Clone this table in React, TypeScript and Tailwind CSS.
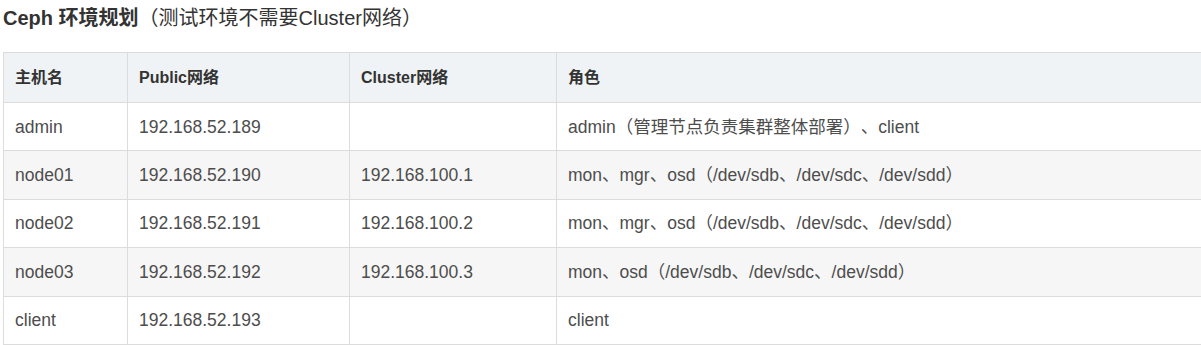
import React from "react";

const HEADERS = ["主机名", "Public网络", "Cluster网络", "角色"];

const ROWS: string[][] = [
  ["admin", "192.168.52.189", "", "admin（管理节点负责集群整体部署）、client"],
  ["node01", "192.168.52.190", "192.168.100.1", "mon、mgr、osd（/dev/sdb、/dev/sdc、/dev/sdd）"],
  ["node02", "192.168.52.191", "192.168.100.2", "mon、mgr、osd（/dev/sdb、/dev/sdc、/dev/sdd）"],
  ["node03", "192.168.52.192", "192.168.100.3", "mon、osd（/dev/sdb、/dev/sdc、/dev/sdd）"],
  ["client", "192.168.52.193", "", "client"],
];

const COL_WIDTHS = ["w-[124px]", "w-[222px]", "w-[207px]", ""];

const App = () => {
  return (
    <div
      className="w-screen overflow-hidden bg-white text-[#4d4d4d] [text-spacing-trim:space-all]"
      style={{ fontFamily: '"Liberation Sans", "Noto Sans CJK SC", sans-serif' }}
    >
      <div className="pl-[3px] pt-[3px] text-[20px] leading-[30px] text-[#333]">
        <span className="font-bold">Ceph 环境规划</span>
        <span>（测试环境不需要Cluster网络）</span>
      </div>
      <div className="pl-[3px] pt-[19px]">
        <table className="w-[1240px] border-collapse table-fixed">
          <thead>
            <tr className="bg-[#eff3f5]">
              {HEADERS.map((h, i) => (
                <th
                  key={h}
                  className={`${COL_WIDTHS[i]} h-[50px] border border-[#dcdcdc] px-[11px] text-left text-[16px] font-bold text-[#333]`}
                >
                  {h}
                </th>
              ))}
            </tr>
          </thead>
          <tbody className="text-[17.5px]">
            {ROWS.map((row, r) => (
              <tr key={r} className={r % 2 === 1 ? "bg-[#f6f6f6]" : "bg-white"}>
                {row.map((cell, c) => (
                  <td
                    key={c}
                    className="h-[48.4px] border border-[#dcdcdc] px-[11px] text-left align-middle leading-[24px]"
                  >
                    {cell}
                  </td>
                ))}
              </tr>
            ))}
          </tbody>
        </table>
      </div>
    </div>
  );
};

export default App;
